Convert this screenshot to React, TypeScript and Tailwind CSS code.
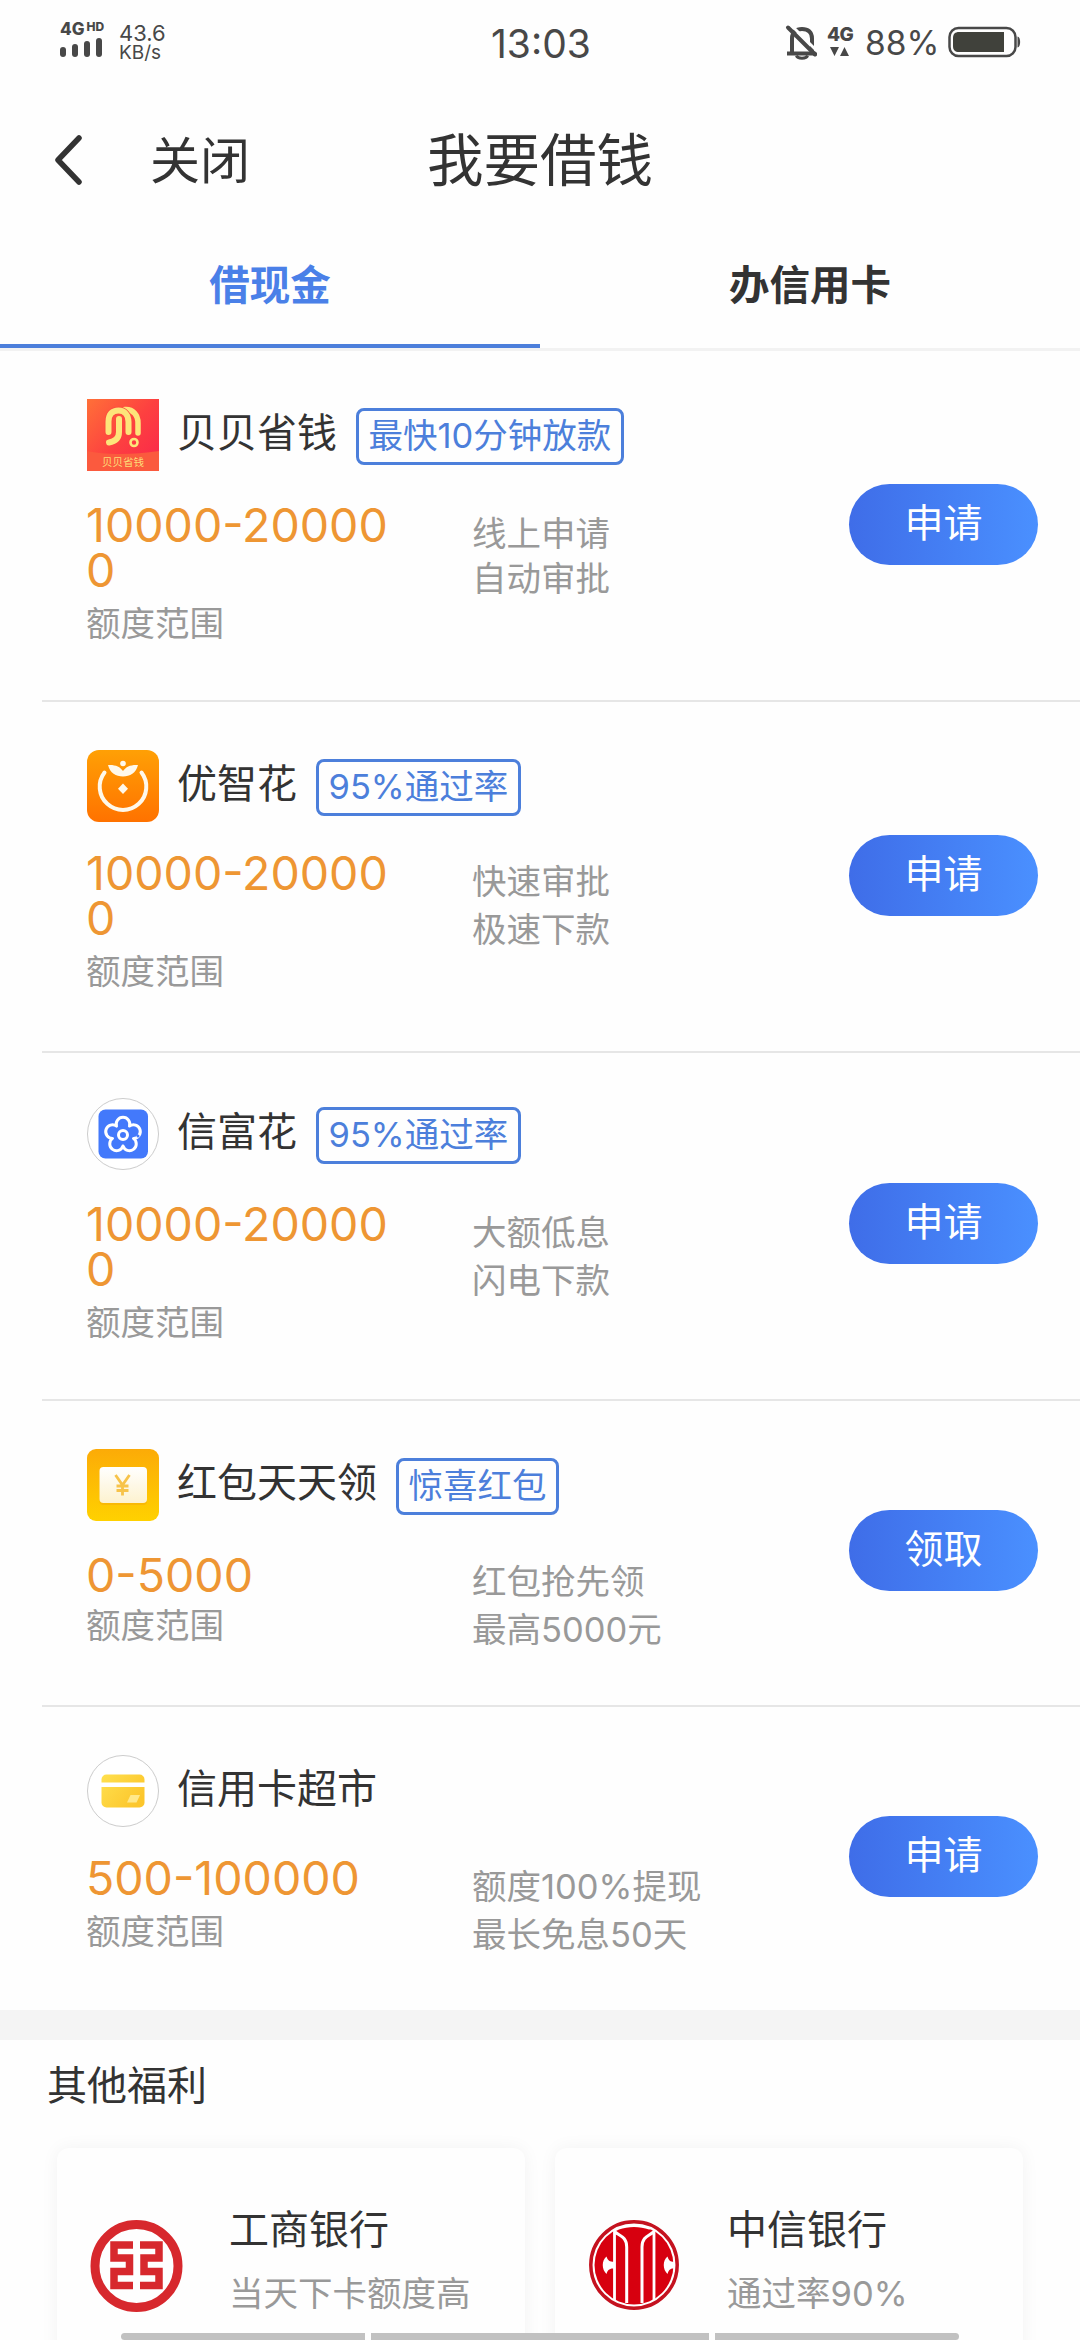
import type { ReactNode } from "react"

type Offer = {
  name: string
  tag?: string
  amount: string
  perks: string[]
  action: string
  icon: ReactNode
  // spacing differs slightly from row to row
  row: string
  body: string
  perkList: string
  label: string
  button: string
}

function BeibeiIcon() {
  return (
    <svg viewBox="0 0 72 72" className="size-[72px]">
      <defs>
        <linearGradient id="beibei" x1="0" y1="0" x2="0.9" y2="0.8">
          <stop offset="0" stopColor="#ff7038" />
          <stop offset="0.6" stopColor="#fd4040" />
          <stop offset="1" stopColor="#fb2d48" />
        </linearGradient>
      </defs>
      <rect width="72" height="72" fill="url(#beibei)" />
      <path d="M0 52C18 56 46 56 72 52V72H0Z" fill="#fb5a3e" />
      <g fill="none" stroke="#fde57a" strokeLinecap="round" strokeWidth="6">
        <path d="M38 10.500C46 10 51 16 51 24V34" strokeWidth="5.500" />
        <path d="M21.500 33V22.500C21.500 15 25.500 11.500 31.500 11.500S41.500 16 41.500 23V33" stroke="#fb4a3e" strokeWidth="7.500" />
        <path d="M21.500 33V22.500C21.500 15 25.500 11.500 31.500 11.500S41.500 16 41.500 23V33" />
        <path d="M32 20V33C32 39 28 42.500 22 43.500" />
        <circle cx="47" cy="43.500" r="3.500" strokeWidth="2.600" />
      </g>
      <text
        x="36"
        y="67"
        textAnchor="middle"
        fontSize="10.500"
        fill="#fddc78"
        className="font-['Noto_Sans_CJK_SC',sans-serif]"
      >
        贝贝省钱
      </text>
    </svg>
  )
}

function YouzhiIcon() {
  return (
    <svg viewBox="0 0 72 72" className="size-[72px]">
      <defs>
        <linearGradient id="youzhi" x1="0" y1="0" x2="0" y2="1">
          <stop offset="0" stopColor="#ffa005" />
          <stop offset="1" stopColor="#ff7200" />
        </linearGradient>
      </defs>
      <rect width="72" height="72" rx="12" fill="url(#youzhi)" />
      <path
        d="M17.500 22.500A23.300 23.300 0 1 0 54.500 22.500"
        fill="none"
        stroke="#fff8ea"
        strokeWidth="4"
        strokeLinecap="round"
      />
      <path d="M21 15C28 14.500 33 16.500 36 21C39 16.500 44 14.500 51 15C49 23 43 26.500 36 26.500S23 23 21 15Z" fill="#fff8ea" />
      <circle cx="36" cy="13.500" r="2.800" fill="#fff8ea" />
      <path d="M36 33.500L41 38.800L36 44L31 38.800Z" fill="#fff8ea" />
    </svg>
  )
}

function XinfuIcon() {
  return (
    <svg viewBox="0 0 72 72" className="size-[72px]">
      <circle cx="36" cy="36" r="35.500" fill="#fff" stroke="#ccc" />
      <rect x="11.500" y="11.500" width="49.500" height="49" rx="7" fill="#4379fb" />
      <g fill="none" stroke="#fff" strokeWidth="3">
        <path
          d="M29.500 28.100A6.800 6.800 0 1 1 42.500 28.100A6.800 6.800 0 1 1 46.500 40.400A6.800 6.800 0 1 1 36 48A6.800 6.800 0 1 1 25.500 40.400A6.800 6.800 0 1 1 29.500 28.100Z"
          strokeLinejoin="round"
        />
        <circle cx="36" cy="37" r="4.500" />
      </g>
      <circle cx="51" cy="38" r="1.500" fill="#4379fb" />
    </svg>
  )
}

function HongbaoIcon() {
  return (
    <svg viewBox="0 0 72 72" className="size-[72px]">
      <defs>
        <linearGradient id="hongbao" x1="0" y1="0" x2="0" y2="1">
          <stop offset="0" stopColor="#fcab07" />
          <stop offset="1" stopColor="#ffd100" />
        </linearGradient>
        <linearGradient id="hongbao-card" x1="0" y1="0" x2="0" y2="1">
          <stop offset="0" stopColor="#fff" />
          <stop offset="1" stopColor="#fdf2cf" />
        </linearGradient>
      </defs>
      <rect width="72" height="72" rx="9" fill="url(#hongbao)" />
      <rect x="12.500" y="20" width="47.500" height="36" rx="4" fill="#f3a908" opacity="0.5" />
      <rect x="12.500" y="18" width="47.500" height="36" rx="4" fill="url(#hongbao-card)" />
      <path
        d="M28.500 26L35.500 36L42.500 26M35.500 36V46.500M29.500 37H41.500M29.500 41.500H41.500"
        fill="none"
        stroke="#f7c34a"
        strokeWidth="2.800"
      />
    </svg>
  )
}

function CardIcon() {
  return (
    <svg viewBox="0 0 72 72" className="size-[72px]">
      <defs>
        <linearGradient id="card" x1="0" y1="0" x2="1" y2="0.6">
          <stop offset="0" stopColor="#ffe04e" />
          <stop offset="1" stopColor="#fcc62c" />
        </linearGradient>
      </defs>
      <circle cx="36" cy="36" r="35.500" fill="#fff" stroke="#ccc" />
      <rect x="14.500" y="19.500" width="43" height="33" rx="5" fill="url(#card)" />
      <rect x="14" y="27.500" width="44" height="4.500" fill="#fff" />
      <path d="M43.500 40H53L49.500 47.500H40Z" fill="#ffe88a" />
    </svg>
  )
}

function IcbcLogo() {
  return (
    <svg viewBox="0 0 93 93" className="size-[93px]">
      <g fill="none" stroke="#d7282d">
        <circle cx="46.500" cy="46" r="41.500" strokeWidth="9" />
        <path
          d="M43 25H24V38H39.500V51.500H24V65.500H43M50 25H69V38H54V51.500H69V65.500H50"
          strokeWidth="7.500"
        />
      </g>
    </svg>
  )
}

function CiticLogo() {
  return (
    <svg viewBox="0 0 93 93" className="size-[93px]">
      <circle cx="46" cy="45" r="43" fill="#fff" />
      <circle cx="46" cy="45" r="39.500" fill="#d7000f" />
      <path d="M24.500 5H68V9L61 9.500C52 6 40 6 31 9.500L28 11H24.500Z" fill="#fff" />
      <path
        d="M27 12C32 16 38.700 17 38.700 27V83M65.500 12C60.500 16 54 17 54 27V83"
        fill="none"
        stroke="#fff"
        strokeWidth="3"
      />
      <path d="M26.500 9V80M66 9V80" stroke="#fff" strokeWidth="2.800" />
      <circle cx="46" cy="45" r="43.200" fill="none" stroke="#c4121f" strokeWidth="3.500" />
      <path d="M26.500 41.500C21 42.500 19.500 39.500 18.500 36.500C13.500 40.500 13.500 49.500 18.500 54C19.500 50.500 21 48 26.500 48.500Z" fill="#fff" />
      <path d="M86 41.500C82 42.500 80.500 39.500 79.500 36.500C74.500 40.500 74.500 49.500 79.500 54C80.500 50.500 82 48 86 48.500Z" fill="#fff" />
    </svg>
  )
}

const offers: Offer[] = [
  {
    name: "贝贝省钱",
    tag: "最快10分钟放款",
    amount: "10000-200000",
    perks: ["线上申请", "自动审批"],
    action: "申请",
    icon: <BeibeiIcon />,
    row: "h-[351px] pt-12",
    body: "mt-8",
    perkList: "pt-2 leading-[45px]",
    label: "mt-1.5",
    button: "mt-[85px]",
  },
  {
    name: "优智花",
    tag: "95%通过率",
    amount: "10000-200000",
    perks: ["快速审批", "极速下款"],
    action: "申请",
    icon: <YouzhiIcon />,
    row: "h-[351px] pt-12",
    body: "mt-[29px]",
    perkList: "pt-[7px] leading-[48px]",
    label: "mt-1.5",
    button: "mt-[85px]",
  },
  {
    name: "信富花",
    tag: "95%通过率",
    amount: "10000-200000",
    perks: ["大额低息", "闪电下款"],
    action: "申请",
    icon: <XinfuIcon />,
    row: "h-[348px] pt-[45px]",
    body: "mt-8",
    perkList: "pt-[7px] leading-[48px]",
    label: "mt-1.5",
    button: "mt-[85px]",
  },
  {
    name: "红包天天领",
    tag: "惊喜红包",
    amount: "0-5000",
    perks: ["红包抢先领", "最高5000元"],
    action: "领取",
    icon: <HongbaoIcon />,
    row: "h-[306px] pt-12",
    body: "mt-8",
    perkList: "pt-[5px] leading-[48px]",
    label: "mt-[3px]",
    button: "mt-[61px]",
  },
  {
    name: "信用卡超市",
    amount: "500-100000",
    perks: ["额度100%提现", "最长免息50天"],
    action: "申请",
    icon: <CardIcon />,
    row: "h-[303px] pt-12",
    body: "mt-[29px]",
    perkList: "pt-[7px] leading-[48px]",
    label: "mt-1.5",
    button: "mt-[61px]",
  },
]

const banks = [
  { name: "工商银行", note: "当天下卡额度高", logo: <IcbcLogo /> },
  { name: "中信银行", note: "通过率90%", logo: <CiticLogo /> },
]

function StatusBar() {
  return (
    <div className="flex h-[84px] items-start text-[#484848]">
      <div className="flex w-[491px] pl-[60px] pt-[20px]">
        <div className="w-[59px]">
          <div className="flex h-[18px] items-start gap-0.5 font-extrabold">
            <span className="text-[17px] leading-[18px]">4G</span>
            <span className="text-[12px] leading-[14px]">HD</span>
          </div>
          <div className="flex h-[19px] items-end gap-1.5">
            <span className="h-[10px] w-1.5 rounded-sm bg-[#484848]" />
            <span className="h-[13px] w-1.5 rounded-sm bg-[#484848]" />
            <span className="h-4 w-1.5 rounded-sm bg-[#484848]" />
            <span className="h-[19px] w-1.5 rounded-sm bg-[#484848]" />
          </div>
        </div>
        <div className="pt-[3px]">
          <div className="text-[22px] leading-5">43.6</div>
          <div className="text-[19px] leading-5">KB/s</div>
        </div>
      </div>
      <div className="w-[293px] pt-[23px] text-[39px] leading-[42px]">13:03</div>
      <svg viewBox="0 0 36 36" className="mt-6 size-9" fill="none" stroke="#484848" strokeWidth="4">
        <path d="M8 29V14.500C8 8 12 5 18 5S28 8 28 14.500V29M3 29.500H33" />
        <path d="M12.500 31.500C13.500 35 22.500 35 23.500 31.500" strokeWidth="3" />
        <path d="M8 2L35 29" stroke="#fefefe" strokeWidth="3" />
        <path d="M4 3.500L31 30.500" strokeLinecap="round" />
      </svg>
      <div className="ml-[7px] w-[38px] pt-[26px]">
        <div className="text-[19px] font-extrabold leading-[18px] tracking-tight">4G</div>
        <svg viewBox="0 0 20 10" className="mt-[3px] ml-[3px] h-2.5 w-5" fill="#484848">
          <path d="M0 0H9L4.500 9ZM10 9H19L14.500 0Z" />
        </svg>
      </div>
      <div className="w-[83px] pt-[25px] text-[33.5px] leading-[37px]">88%</div>
      <svg viewBox="0 0 73 32" className="mt-[26px] h-8 w-[73px]">
        <rect x="1.500" y="2" width="66" height="28" rx="9" fill="none" stroke="#484848" strokeWidth="2.500" />
        <path d="M11 6H56V26H11C7 26 5 24 5 20V12C5 8 7 6 11 6Z" fill="#40413b" />
        <path d="M69.500 10.500C73 11 73 21 69.500 21.500Z" fill="#484848" />
      </svg>
    </div>
  )
}

function Header() {
  return (
    <header className="flex h-[152px] items-center">
      <div className="flex w-[427px] items-center">
        <svg viewBox="0 0 28 52" className="ml-[54px] h-[52px] w-7">
          <path
            d="M25 4L4 26L25 48"
            fill="none"
            stroke="#333"
            strokeWidth="5.500"
            strokeLinecap="round"
            strokeLinejoin="round"
          />
        </svg>
        <span className="ml-[68px] pt-0.5 text-[50px]">关闭</span>
      </div>
      <h1 className="pt-0.5 text-[56.5px]">我要借钱</h1>
    </header>
  )
}

function OfferRow({ offer }: { offer: Offer }) {
  return (
    <li className={`ml-[42px] flex border-b-2 border-[#e6e6e6] pl-[45px] last:border-b-0 ${offer.row}`}>
      <div className="w-[762px]">
        <div className="flex h-[72px]">
          {offer.icon}
          <h2 className="ml-[18px] mt-1 text-[40px] leading-[60px]">{offer.name}</h2>
          {offer.tag && (
            <span className="ml-[19px] mt-[9px] h-[57px] rounded-lg border-3 border-[#4c7fdb] px-[9.500px] text-[34.5px] leading-[49px] text-[#4c7fdb]">
              {offer.tag}
            </span>
          )}
        </div>
        <div className={`flex ${offer.body}`}>
          <div className="w-[385px]">
            <p className="-ml-px w-[315px] break-all text-[46.5px] leading-[45px] text-[#ee9633]">{offer.amount}</p>
            <p className={`-ml-px text-[34.5px] leading-[50px] text-[#999] ${offer.label}`}>额度范围</p>
          </div>
          <div className={`text-[34.5px] text-[#999] ${offer.perkList}`}>
            {offer.perks.map((perk) => (
              <p key={perk}>{perk}</p>
            ))}
          </div>
        </div>
      </div>
      <button
        className={`h-[81px] w-[189px] rounded-full bg-linear-to-r from-[#3f6de8] to-[#4a90ff] pb-1 text-[39px] leading-none text-white ${offer.button}`}
      >
        {offer.action}
      </button>
    </li>
  )
}

export default function App() {
  return (
    <div className="relative h-[2340px] w-[1080px] overflow-hidden bg-[#fefefe] font-['Inter','Noto_Sans_CJK_SC',sans-serif] text-[#333]">
      <StatusBar />
      <Header />

      <nav className="grid h-[115px] grid-cols-2 border-b-3 border-[#f2f2f2] text-center text-[40.5px] font-bold leading-[100px]">
        <a className="h-28 border-b-4 border-[#4c7fdb] text-[#4a80e8]">借现金</a>
        <a>办信用卡</a>
      </nav>

      <ul>
        {offers.map((offer) => (
          <OfferRow key={offer.name} offer={offer} />
        ))}
      </ul>

      <section className="border-t-30 border-[#f4f4f4]">
        <h2 className="pl-[47px] pt-4 text-[40px] leading-[60px]">其他福利</h2>
        <div className="mt-8 flex gap-[30px] pl-[57px]">
          {banks.map((bank) => (
            <div
              key={bank.name}
              className="flex h-[240px] w-[468px] rounded-xl bg-[#fefefe] pl-[33px] pt-[72px] shadow-[0_0_18px_rgba(0,0,0,0.05)]"
            >
              {bank.logo}
              <div className="-mt-5 ml-[46px]">
                <h3 className="text-[40px] leading-[60px]">{bank.name}</h3>
                <p className="mt-1.5 text-[34.5px] leading-[56px] text-[#999]">{bank.note}</p>
              </div>
            </div>
          ))}
        </div>
      </section>

      {/* system gesture bar */}
      <div className="absolute bottom-0 left-[121px] flex h-[7px] w-[838px] gap-1.5 bg-[#fefefe]">
        <span className="w-[244px] rounded-l-full bg-[#c1c1c1]" />
        <span className="w-[338px] bg-[#c1c1c1]" />
        <span className="w-[244px] rounded-r-full bg-[#c1c1c1]" />
      </div>
    </div>
  )
}
